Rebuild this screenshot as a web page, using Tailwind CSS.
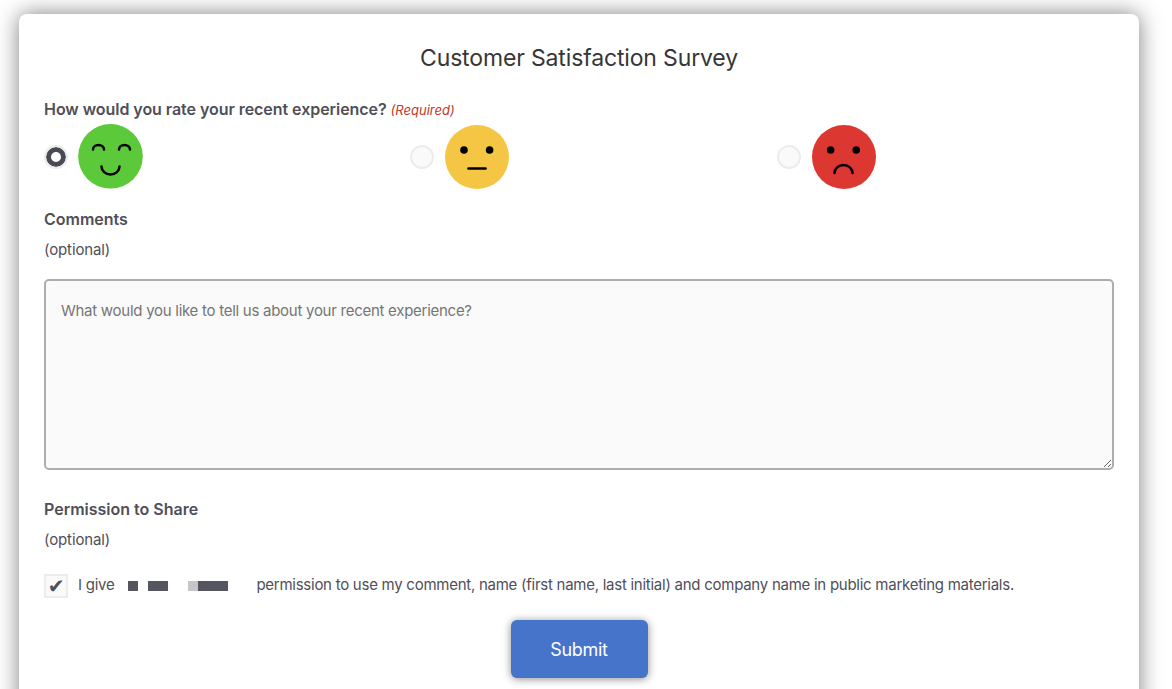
<!DOCTYPE html>
<html lang="en">
<head>
<meta charset="utf-8">
<title>Customer Satisfaction Survey</title>
<script src="https://cdn.jsdelivr.net/npm/@tailwindcss/browser@4"></script>
</head>
<body class="h-[689px] overflow-hidden bg-white font-['Inter',sans-serif] text-[#4f4f59]">
  <form class="mt-[14px] ml-[19px] w-[1120px] rounded-lg bg-white px-[25px] pt-7 pb-20 shadow-[0_0_22px_rgba(0,0,0,0.5)]">
    <h1 class="text-center text-[23px] leading-8 font-normal tracking-[-0.15px] text-[#363636]">Customer Satisfaction Survey</h1>

    <p class="mt-[23px] h-6 text-base leading-6 font-semibold tracking-[-0.05px]">How would you rate your recent experience? <span class="text-[13px] font-normal tracking-normal text-[#c0392b] italic">(Required)</span></p>
    <div class="mt-[3px] grid h-16 grid-cols-3 gap-x-[29px]">
      <label class="flex items-center gap-[11px]">
        <input type="radio" name="rating" checked class="size-6 appearance-none rounded-full border-2 border-[#ececec] bg-[#fafafa] checked:bg-white checked:shadow-[inset_0_0_0_5px_#4a4a55]">
        <svg class="-ml-px size-[65px] shrink-0" viewBox="0 0 65 65" fill="none" stroke="#000" stroke-width="2.5" stroke-linecap="round">
          <circle cx="32.5" cy="32.3" r="32.3" fill="#5bc93a" stroke="none"/>
          <path d="M15 25.5a5.5 4.6 0 0 1 11 0"/>
          <path d="M41 25.5a5.5 4.6 0 0 1 11 0"/>
          <path d="M23.5 42.5a9 8 0 0 0 18 0"/>
        </svg>
      </label>
      <label class="flex items-center gap-[11px]">
        <input type="radio" name="rating" class="size-6 appearance-none rounded-full border-2 border-[#ececec] bg-[#fafafa]">
        <svg class="size-16 shrink-0" viewBox="0 0 64 64" fill="none" stroke="#000" stroke-width="2.6" stroke-linecap="round">
          <circle cx="32" cy="32" r="32" fill="#f4c644" stroke="none"/>
          <circle cx="19" cy="25" r="3.8" fill="#000" stroke="none"/>
          <circle cx="44.6" cy="25" r="3.8" fill="#000" stroke="none"/>
          <path d="M23.5 43.5h17"/>
        </svg>
      </label>
      <label class="flex items-center gap-[11.6px]">
        <input type="radio" name="rating" class="size-6 appearance-none rounded-full border-2 border-[#ececec] bg-[#fafafa]">
        <svg class="size-16 shrink-0" viewBox="0 0 64 64" fill="none" stroke="#000" stroke-width="2.5" stroke-linecap="round">
          <circle cx="32" cy="32" r="32" fill="#dc3731" stroke="none"/>
          <circle cx="18.6" cy="25" r="3.8" fill="#000" stroke="none"/>
          <circle cx="44.2" cy="25" r="3.8" fill="#000" stroke="none"/>
          <path d="M22.5 48a9 8 0 0 1 18 0"/>
        </svg>
      </label>
    </div>

    <p class="mt-[19px] text-base leading-6 font-semibold">Comments</p>
    <p class="mt-[7px] text-[15px] leading-6 tracking-[-0.12px]">(optional)</p>
    <textarea class="mt-[17px] block h-[191px] w-full rounded-[5px] border-2 border-[#adadad] bg-[#fafafa] px-[15px] py-[18px] text-[15px] leading-[24px] tracking-[-0.27px] outline-none placeholder:text-[#757575]" placeholder="What would you like to tell us about your recent experience?"></textarea>

    <p class="mt-[27px] text-base leading-6 font-semibold">Permission to Share</p>
    <p class="mt-[7px] text-[15px] leading-6 tracking-[-0.12px]">(optional)</p>
    <div class="mt-[22px] flex h-6 items-center text-[15px] tracking-[-0.26px]">
      <span class="flex size-6 items-center justify-center border-2 border-[#ececec] bg-[#fafafa] font-['DejaVu_Sans',sans-serif] text-[20px] leading-none">✔</span>
      <span class="ml-[10px] pb-[2px]">I give</span>
      <span class="ml-[14px] flex items-center">
        <span class="h-[10px] w-[10px] bg-[#555660]"></span>
        <span class="ml-[10px] h-[10px] w-5 bg-[#555660]"></span>
        <span class="ml-5 h-[10px] w-[10px] bg-[#c5c5ca]"></span>
        <span class="h-[10px] w-[30px] bg-[#555660]"></span>
      </span>
      <span class="ml-7 pb-[2px]">permission to use my comment, name (first name, last initial) and company name in public marketing materials.</span>
    </div>
    <div class="mt-[22px] flex justify-center">
      <button type="button" class="h-[58px] w-[137px] rounded-md bg-[#4674cb] pt-[2px] text-lg tracking-[-0.3px] text-white shadow-[0_1px_8px_rgba(0,0,0,0.45)]">Submit</button>
    </div>
  </form>
</body>
</html>
